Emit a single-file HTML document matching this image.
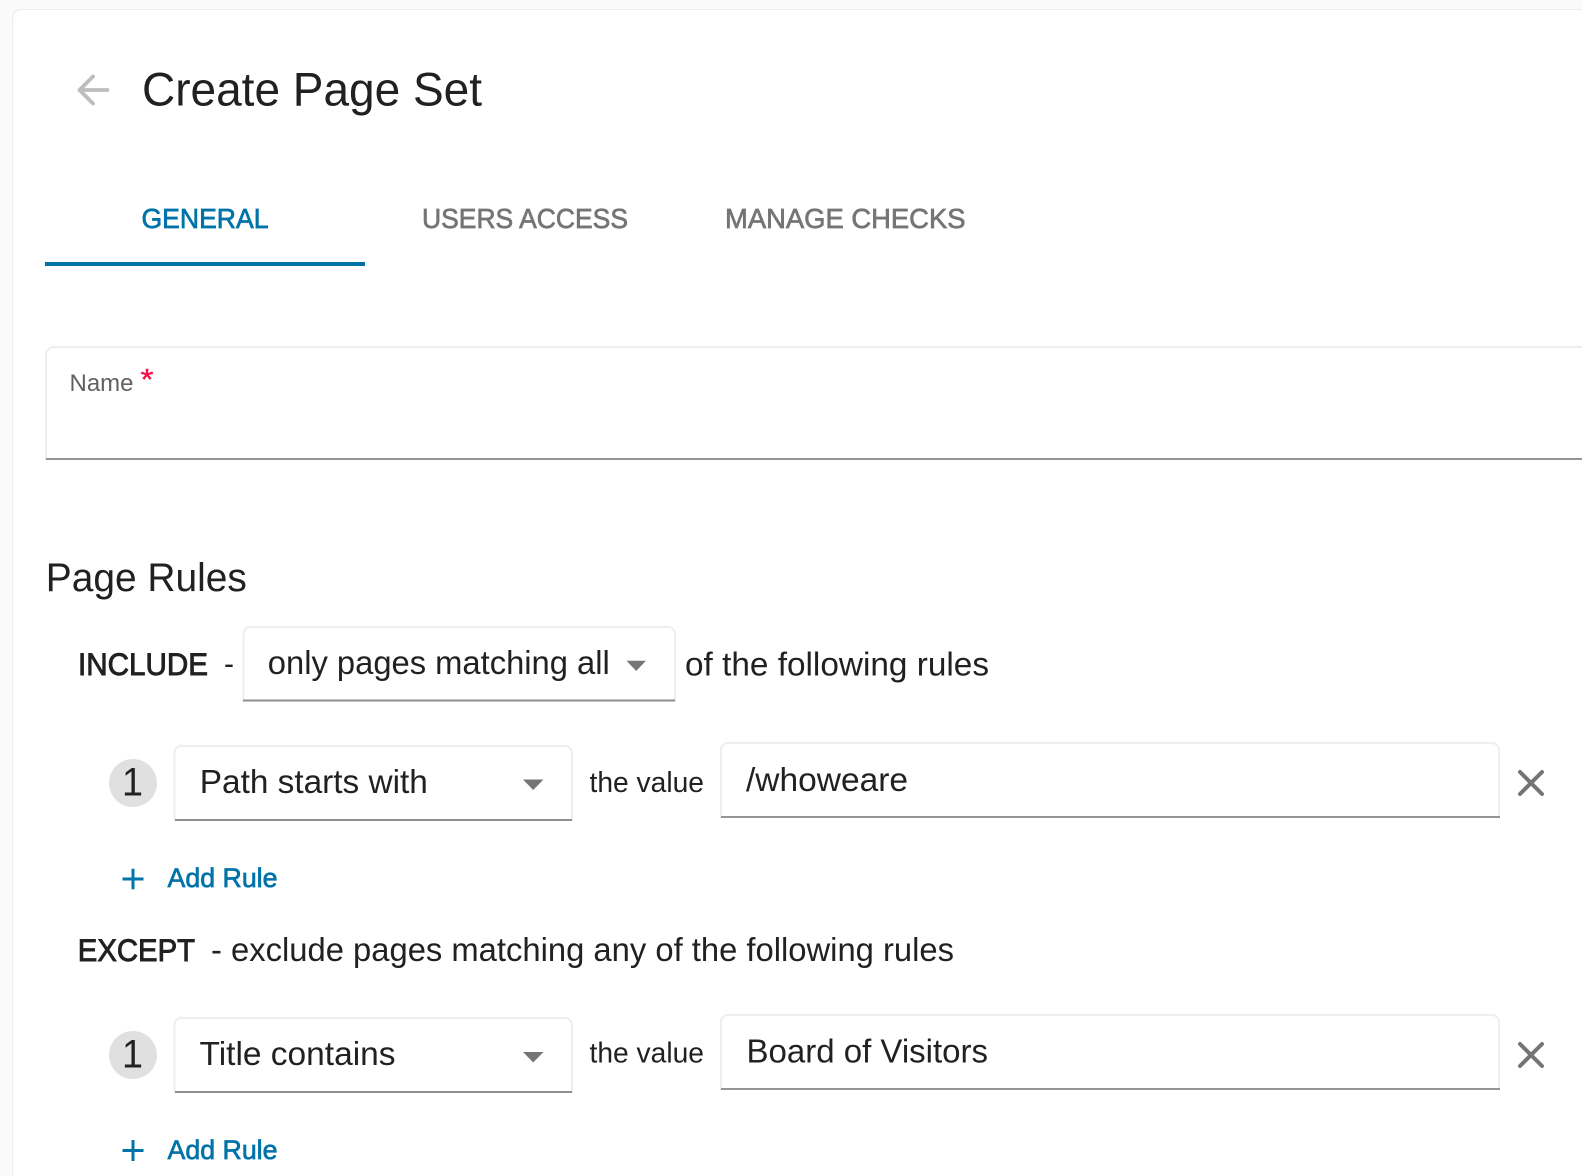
<!DOCTYPE html>
<html lang="en">
<head>
<meta charset="utf-8">
<title>Create Page Set</title>
<style>
html,body{margin:0;padding:0;width:1582px;height:1176px;overflow:hidden;background:#fafafa}
svg{display:block;position:absolute;left:0;top:0}
text{font-family:"Liberation Sans",sans-serif;fill:#212121}
.bm{fill:#0073a8;stroke:#0073a8;stroke-width:.7px}
.d{stroke:#212121;stroke-width:.9px}
.g{fill:#757575;stroke:#757575;stroke-width:.7px}
</style>
</head>
<body>
<svg width="1582" height="1176" viewBox="0 0 1582 1176" xmlns="http://www.w3.org/2000/svg">
<rect x="12" y="9" width="1600" height="1200" rx="9" fill="#eeeeee"/>
<rect x="13" y="10" width="1600" height="1200" rx="9" fill="#fff"/>

<path d="M107.500 90H80M93 76.500L79.500 90L93 103.500" fill="none" stroke="#bdbdbd" stroke-width="3.800" stroke-linecap="round" stroke-linejoin="round"/>
<text x="142" y="105.500" font-size="47.500" textLength="340" lengthAdjust="spacingAndGlyphs">Create Page Set</text>

<text class="bm" x="141.500" y="228" font-size="28" textLength="127" lengthAdjust="spacingAndGlyphs">GENERAL</text>
<text class="g" x="422" y="228" font-size="28" textLength="206" lengthAdjust="spacingAndGlyphs">USERS ACCESS</text>
<text class="g" x="725" y="228" font-size="28" textLength="240.500" lengthAdjust="spacingAndGlyphs">MANAGE CHECKS</text>
<rect x="45" y="262" width="320" height="4" fill="#0073a8"/>

<path d="M46 460V355a8 8 0 0 1 8-8H1600" fill="none" stroke="#eeeeee" stroke-width="2"/>
<rect x="46" y="458" width="1540" height="2" fill="#949494"/>
<text x="69.500" y="391" font-size="24.500" textLength="64" lengthAdjust="spacingAndGlyphs" style="fill:#616161">Name</text>
<text x="140.500" y="389.500" font-size="30" style="fill:#f50f4b;stroke:#f50f4b;stroke-width:.4px" textLength="13" lengthAdjust="spacingAndGlyphs">*</text>

<text x="45.800" y="591" font-size="40" textLength="201" lengthAdjust="spacingAndGlyphs">Page Rules</text>

<text class="d" x="78" y="675" font-size="31.500" textLength="130" lengthAdjust="spacingAndGlyphs">INCLUDE</text>
<text x="224" y="674" font-size="31" textLength="10" lengthAdjust="spacingAndGlyphs">-</text>
<path d="M243.500 702V634a7 7 0 0 1 7-7H668a7 7 0 0 1 7 7V702" fill="none" stroke="#eeeeee" stroke-width="2"/>
<rect x="243" y="699.500" width="432" height="2" fill="#8e8e8e"/>
<text x="267.800" y="673.800" font-size="33" textLength="342" lengthAdjust="spacingAndGlyphs">only pages matching all</text>
<path d="M626.500 660.700H646L636.200 671Z" fill="#757575"/>
<text x="685" y="675.300" font-size="33" textLength="304" lengthAdjust="spacingAndGlyphs">of the following rules</text>

<circle cx="133" cy="783" r="24" fill="#e0e0e0"/>
<text x="122" y="795.500" font-size="40" textLength="21" lengthAdjust="spacingAndGlyphs">1</text>
<path d="M174.500 821V753a7 7 0 0 1 7-7H565a7 7 0 0 1 7 7V821" fill="none" stroke="#eeeeee" stroke-width="2"/>
<rect x="175" y="819" width="397" height="2" fill="#8e8e8e"/>
<text x="199.800" y="793" font-size="33" textLength="228" lengthAdjust="spacingAndGlyphs">Path starts with</text>
<path d="M523 779.500H543.500L533.200 790Z" fill="#757575"/>
<text x="589.500" y="792" font-size="29" textLength="114.500" lengthAdjust="spacingAndGlyphs">the value</text>
<path d="M721 818V750a7 7 0 0 1 7-7H1492a7 7 0 0 1 7 7V818" fill="none" stroke="#eeeeee" stroke-width="2"/>
<rect x="721" y="816" width="779" height="2" fill="#949494"/>
<text x="746" y="790.800" font-size="33" textLength="162" lengthAdjust="spacingAndGlyphs">/whoweare</text>
<path d="M1520 772L1542 794M1542 772L1520 794" fill="none" stroke="#757575" stroke-width="4" stroke-linecap="round"/>
<path d="M122.500 879H143.500M133 868.700V889.300" fill="none" stroke="#0073a8" stroke-width="3"/>
<text class="bm" x="167.500" y="887" font-size="27" textLength="110" lengthAdjust="spacingAndGlyphs">Add Rule</text>

<text class="d" x="77.800" y="961" font-size="31.500" textLength="117.200" lengthAdjust="spacingAndGlyphs">EXCEPT</text>
<text x="211" y="961" font-size="33" textLength="743" lengthAdjust="spacingAndGlyphs">- exclude pages matching any of the following rules</text>

<circle cx="133" cy="1055" r="24" fill="#e0e0e0"/>
<text x="122" y="1067.500" font-size="40" textLength="21" lengthAdjust="spacingAndGlyphs">1</text>
<path d="M174.500 1093V1025a7 7 0 0 1 7-7H565a7 7 0 0 1 7 7V1093" fill="none" stroke="#eeeeee" stroke-width="2"/>
<rect x="175" y="1091" width="397" height="2" fill="#8e8e8e"/>
<text x="199.500" y="1065" font-size="33" textLength="196" lengthAdjust="spacingAndGlyphs">Title contains</text>
<path d="M523 1052H543.500L533.200 1062.500Z" fill="#757575"/>
<text x="589.500" y="1062.500" font-size="29" textLength="114.500" lengthAdjust="spacingAndGlyphs">the value</text>
<path d="M721 1090V1022a7 7 0 0 1 7-7H1492a7 7 0 0 1 7 7V1090" fill="none" stroke="#eeeeee" stroke-width="2"/>
<rect x="721" y="1088" width="779" height="2" fill="#949494"/>
<text x="746.500" y="1062.300" font-size="33" textLength="241.500" lengthAdjust="spacingAndGlyphs">Board of Visitors</text>
<path d="M1520 1044L1542 1066M1542 1044L1520 1066" fill="none" stroke="#757575" stroke-width="4" stroke-linecap="round"/>
<path d="M122.500 1150.500H143.500M133 1140V1161" fill="none" stroke="#0073a8" stroke-width="3"/>
<text class="bm" x="167.500" y="1159" font-size="27" textLength="110" lengthAdjust="spacingAndGlyphs">Add Rule</text>
</svg>
</body>
</html>
